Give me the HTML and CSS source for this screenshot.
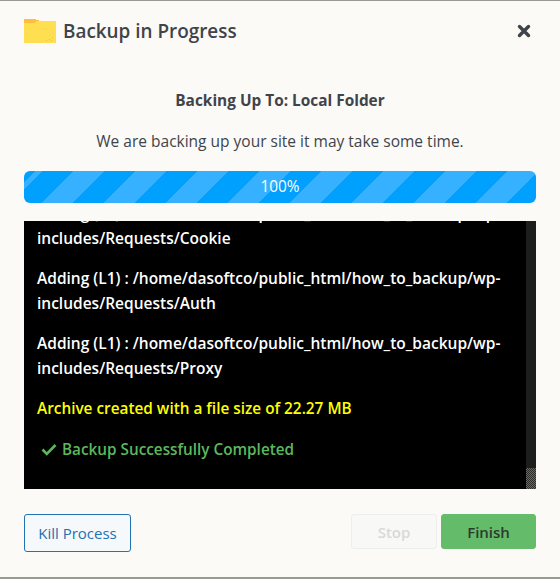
FILE: index.html
```html
<!DOCTYPE html>
<html lang="en">
<head>
  <meta charset="UTF-8">
  <meta name="viewport" content="width=device-width, initial-scale=1.0">
  <title>Backup in Progress</title>
  <link rel="stylesheet" href="styles.css">
</head>
<body>

<div class="modal">
  <div class="modal-header">
    <svg class="folder-icon" width="32" height="24" viewBox="0 0 32 24">
      <path d="M0 2H32V24H0z" fill="#ffdf50"/>
      <path d="M0 0H11l2 1h2v1H12l-1 2H0z" fill="#ffbd3d"/>
      <path d="M22 21h1v1h-1zM25 20h1v1h-1zM27 21h1v1h-1zM28 18h1v1h-1z" fill="#f2bd3a"/>
    </svg>
    <h2 class="modal-title">Backup in Progress</h2>
    <svg class="close-icon" width="14" height="14" viewBox="0 0 14 14">
      <path d="M2.5 2.5l9 9M11.5 2.5l-9 9" stroke="#3f444b" stroke-width="3.4" stroke-linecap="round"/>
    </svg>
  </div>

  <div class="modal-body">
    <h3 class="backup-target">Backing Up To: Local Folder</h3>
    <p class="backup-note">We are backing up your site it may take some time.</p>

    <div class="progress">100%</div>

    <div class="log">
      <div class="log-lines">
        <p>Adding (L1) : /home/dasoftco/public_html/how_to_backup/wp-includes/Requests/Cookie</p>
        <p>Adding (L1) : /home/dasoftco/public_html/how_to_backup/wp-includes/Requests/Auth</p>
        <p>Adding (L1) : /home/dasoftco/public_html/how_to_backup/wp-includes/Requests/Proxy</p>
        <p class="log-yellow">Archive created with a file size of 22.27 MB</p>
        <p class="log-green">
          <svg class="check-icon" width="16" height="13" viewBox="0 0 16 13">
            <path d="M1.5 6.5l4.3 4.3L14.5 2" fill="none" stroke="#5cb85c" stroke-width="2.6"/>
          </svg>
          Backup Successfully Completed
        </p>
      </div>
      <div class="log-scrollbar"><div class="log-thumb"></div></div>
    </div>
  </div>

  <div class="modal-footer">
    <button class="btn btn-kill">Kill Process</button>
    <div class="footer-right">
      <button class="btn btn-stop">Stop</button>
      <button class="btn btn-finish">Finish</button>
    </div>
  </div>
</div>

</body>
</html>
```

FILE: styles.css
```css
* {
  box-sizing: border-box;
}

html, body {
  height: 100%;
}

body {
  margin: 0;
  background: #ffffff;
  font-family: "Open Sans", "Noto Sans", sans-serif;
  color: #3f444b;
}

.modal {
  height: 579px;
  background: #fbfaf7;
  border-top: 1px solid #9a9a92;
  border-bottom: 2px solid #9a9a92;
  display: flex;
  flex-direction: column;
}

/* Header */
.modal-header {
  display: flex;
  align-items: center;
  height: 60px;
  padding: 0 29px 0 24px;
}

.folder-icon {
  margin-right: 7px;
  flex-shrink: 0;
}

.modal-title {
  flex: 1;
  margin: 0;
  font-size: 18.9px;
  font-weight: 600;
}

/* Body */
.modal-body {
  padding: 0 24px;
}

.backup-target {
  margin: 30px 0 0;
  font-size: 15.4px;
  line-height: 20px;
  font-weight: 700;
  text-align: center;
}

.backup-note {
  margin: 20px 0 0;
  font-size: 15.5px;
  line-height: 20px;
  text-align: center;
}

.progress {
  margin-top: 20px;
  height: 32px;
  line-height: 32px;
  border-radius: 6px;
  color: #ffffff;
  font-size: 15.4px;
  text-align: center;
  background-color: #00a0ff;
  /* first layer keeps the top left corner dark, second one is the stripes */
  background-image:
    linear-gradient(135deg, #00a0ff 8px, transparent 8px),
    linear-gradient(135deg, #36b1ff 25%, transparent 25%, transparent 50%, #36b1ff 50%, #36b1ff 75%, transparent 75%);
  background-size: 100% 100%, 62px 62px;
  background-position: 0 0, -13px 0;
}

.log {
  margin-top: 18px;
  height: 268px;
  display: flex;
  background: #000000;
  overflow: hidden;
}

.log-lines {
  flex: 1;
  display: flex;
  flex-direction: column;
  justify-content: flex-end;
  padding: 0 22px 27px 13px;
  color: #ffffff;
  font-size: 15.5px;
  font-weight: 600;
  line-height: 25px;
}

.log-lines p {
  margin: 15px 0 0;
}

.log-lines .log-yellow {
  color: #ffff00;
  font-size: 15.35px;
}

.log-lines .log-green {
  margin-top: 16px;
  color: #5cb85c;
  font-size: 15.3px;
}

.check-icon {
  margin: 0 1px 0 4px;
  vertical-align: -1px;
}

.log-scrollbar {
  width: 10px;
  flex-shrink: 0;
  display: flex;
  align-items: flex-end;
  background: #1c1e1b;
}

.log-thumb {
  width: 100%;
  height: 21px;
  background: repeating-conic-gradient(#6a6a60 0 25%, #2a2a26 0 50%) 0 0 / 2px 2px;
}

/* Footer */
.modal-footer {
  display: flex;
  justify-content: space-between;
  align-items: flex-start;
  padding: 25px 24px 0;
}

.footer-right {
  display: flex;
  gap: 4px;
}

.btn {
  font-family: inherit;
  font-size: 15px;
  border-radius: 3px;
  padding: 0;
  cursor: pointer;
}

.btn-kill {
  width: 107px;
  height: 38px;
  background: #f6f9fb;
  border: 1px solid #2271b1;
  color: #2271b1;
}

.btn-stop {
  width: 86px;
  height: 35px;
  background: #f8f8f6;
  border: 1px solid #eeeeec;
  color: #d9d9d7;
  font-weight: 600;
}

.btn-finish {
  width: 95px;
  height: 35px;
  background: #64bb6a;
  border: 1px solid #64bb6a;
  color: #2c3a2d;
  font-weight: 600;
}
```
